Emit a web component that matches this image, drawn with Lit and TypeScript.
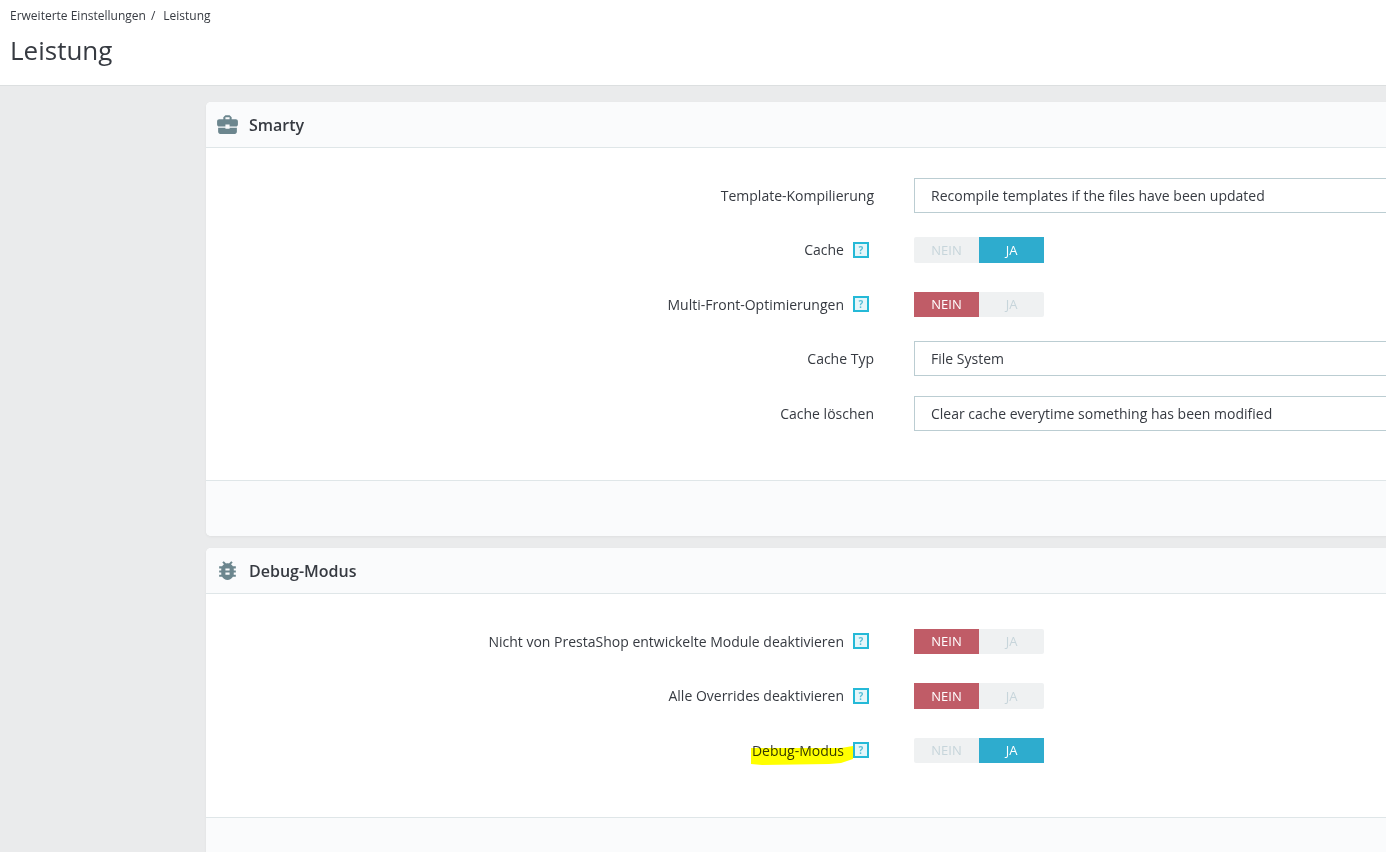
import { LitElement, html, css, nothing } from 'lit';
import { customElement } from 'lit/decorators.js';

type Row =
  | { label: string; kind: 'select'; value: string; help?: boolean; mark?: boolean }
  | { label: string; kind: 'toggle'; on: boolean; help?: boolean; mark?: boolean };

const smartyRows: Row[] = [
  { label: 'Template-Kompilierung', kind: 'select', value: 'Recompile templates if the files have been updated' },
  { label: 'Cache', kind: 'toggle', on: true, help: true },
  { label: 'Multi-Front-Optimierungen', kind: 'toggle', on: false, help: true },
  { label: 'Cache Typ', kind: 'select', value: 'File System' },
  { label: 'Cache löschen', kind: 'select', value: 'Clear cache everytime something has been modified' },
];

const debugRows: Row[] = [
  { label: 'Nicht von PrestaShop entwickelte Module deaktivieren', kind: 'toggle', on: false, help: true },
  { label: 'Alle Overrides deaktivieren', kind: 'toggle', on: false, help: true },
  { label: 'Debug-Modus', kind: 'toggle', on: true, help: true, mark: true },
];

// material icons: business_center, bug_report
const briefcase = html`<svg viewBox="0 0 24 24" width="25" height="25">
  <path fill="#6c868e" d="M10 16v-1H3.010L3 19c0 1.110.89 2 2 2h14c1.110 0 2-.89 2-2v-4h-7v1h-4zm10-9h-4.010V5l-2-2h-4l-2 2v2H4c-1.100 0-2 .9-2 2v3c0 1.110.89 2 2 2h6v-2h4v2h6c1.100 0 2-.9 2-2V9c0-1.100-.9-2-2-2zm-6 0h-4V5h4v2z"/>
</svg>`;

const bug = html`<svg viewBox="0 0 24 24" width="25" height="25">
  <path fill="#6c868e" d="M20 8h-2.810c-.45-.78-1.070-1.450-1.820-1.960L17 4.410 15.590 3l-2.170 2.170C12.960 5.060 12.490 5 12 5c-.49 0-.96.06-1.410.17L8.410 3 7 4.410l1.620 1.630C7.880 6.550 7.260 7.220 6.810 8H4v2h2.090c-.05.33-.09.66-.09 1v1H4v2h2v1c0 .34.04.67.09 1H4v2h2.810c1.040 1.790 2.970 3 5.190 3s4.150-1.210 5.190-3H20v-2h-2.090c.05-.33.09-.66.09-1v-1h2v-2h-2v-1c0-.34-.04-.67-.09-1H20V8zm-6 8h-4v-2h4v2zm0-4h-4v-2h4v2z"/>
</svg>`;

@customElement('app-root')
export class AppRoot extends LitElement {
  static styles = css`
    :host {
      display: block;
      height: 852px;
      overflow: hidden;
      background: #eaebec;
      font-family: 'Open Sans', sans-serif;
      color: #363a41;
    }

    .page-head {
      height: 86px;
      box-sizing: border-box;
      background: #fff;
      border-bottom: 1px solid #dcdfe0;
      padding: 8px 10px 0;
    }

    .crumbs {
      display: flex;
      gap: 5px;
      font-size: 12px;
      line-height: 16px;
    }

    .crumbs span:last-child {
      margin-left: 3px;
    }

    h1 {
      margin: 9px 0 0;
      font-size: 26px;
      line-height: 35px;
      font-weight: 400;
    }

    .content {
      width: 1300px;
      margin-left: 206px;
      padding-top: 16px;
      display: flex;
      flex-direction: column;
      gap: 12.5px;
    }

    .panel {
      background: #fff;
      border-radius: 5px;
      box-shadow: 0 1px 3px rgba(0, 0, 0, 0.05);
    }

    .panel-head {
      height: 46px;
      box-sizing: border-box;
      display: flex;
      align-items: center;
      gap: 9px;
      padding-left: 9px;
      background: #fafbfc;
      border-bottom: 1px solid #dfe6e8;
      border-radius: 5px 5px 0 0;
      font-size: 16px;
      font-weight: 600;
    }

    .panel-icon {
      display: flex;
    }

    .panel-body {
      display: flex;
      flex-direction: column;
      gap: 20px;
      padding: 30px 0 49px;
    }

    .row {
      display: flex;
      align-items: center;
      height: 34.5px;
      gap: 40px;
    }

    .label {
      width: 668px;
      display: flex;
      justify-content: flex-end;
      align-items: center;
      gap: 9px;
      font-size: 14px;
    }

    .label-text {
      position: relative;
    }

    .mark {
      position: absolute;
      left: -1px;
      top: 4px;
      mix-blend-mode: multiply;
    }

    .help {
      width: 16px;
      height: 16px;
      box-sizing: border-box;
      margin-right: 5px;
      border: 2px solid #25b9d7;
      background: #e5f6fa;
      color: #5cbfd6;
      font-size: 10px;
      font-weight: 700;
      line-height: 12px;
      text-align: center;
    }

    .select {
      flex: 1;
      height: 35px;
      box-sizing: border-box;
      display: flex;
      align-items: center;
      padding-left: 16px;
      border: 1px solid #bbcdd2;
      font-size: 14px;
    }

    .toggle {
      display: flex;
      width: 130px;
      height: 25.5px;
      border-radius: 2px;
      overflow: hidden;
      background: #eff1f2;
      color: #c7d5db;
      font-size: 13px;
    }

    .toggle span {
      flex: 1;
      display: flex;
      align-items: center;
      justify-content: center;
    }

    .toggle .yes {
      background: #2eacce;
      color: #fff;
    }

    .toggle .no {
      background: #c05c67;
      color: #fff;
    }

    .toggle.is-on {
      border-radius: 2px 0 0 2px;
    }

    .toggle.is-off {
      border-radius: 0 2px 2px 0;
    }

    .panel-foot {
      height: 55px;
      background: #fafbfc;
      border-top: 1px solid #dfe6e8;
      border-radius: 0 0 5px 5px;
    }
  `;

  renderRow(row: Row) {
    return html`
      <div class="row">
        <div class="label">
          <span class="label-text">
            ${row.label}
            ${row.mark
              ? html`<svg class="mark" width="102" height="20" viewBox="0 0 102 20">
                  <path fill="#ffff00" d="M0 3 L90 3 L102 1 L102 14 L90 18 L78 19 L11 20 L0 19z"/>
                </svg>`
              : nothing}
          </span>
          ${row.help ? html`<span class="help">?</span>` : nothing}
        </div>
        ${row.kind === 'select'
          ? html`<div class="select">${row.value}</div>`
          : html`<div class="toggle ${row.on ? 'is-on' : 'is-off'}">
              <span class=${row.on ? '' : 'no'}>NEIN</span>
              <span class=${row.on ? 'yes' : ''}>JA</span>
            </div>`}
      </div>
    `;
  }

  render() {
    return html`
      <div class="page-head">
        <div class="crumbs"><span>Erweiterte Einstellungen</span><span>/</span><span>Leistung</span></div>
        <h1>Leistung</h1>
      </div>
      <div class="content">
        <section class="panel">
          <div class="panel-head"><span class="panel-icon">${briefcase}</span>Smarty</div>
          <div class="panel-body">${smartyRows.map((r) => this.renderRow(r))}</div>
          <div class="panel-foot"></div>
        </section>
        <section class="panel">
          <div class="panel-head"><span class="panel-icon">${bug}</span>Debug-Modus</div>
          <div class="panel-body">${debugRows.map((r) => this.renderRow(r))}</div>
          <div class="panel-foot"></div>
        </section>
      </div>
    `;
  }
}
